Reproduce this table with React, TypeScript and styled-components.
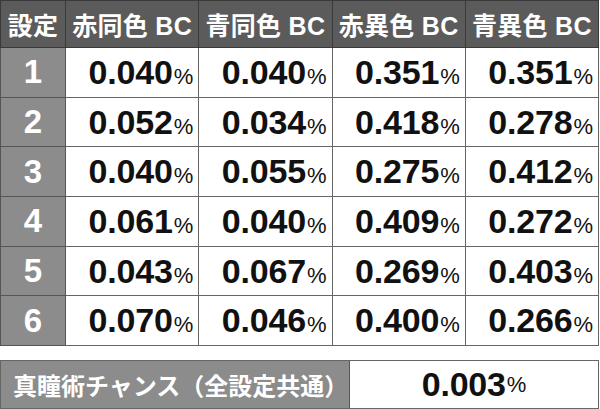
import { FC } from 'react';
import styled, { createGlobalStyle } from 'styled-components';

type Row = {
  setting: number;
  values: string[];
};

const headers = ['赤同色 BC', '青同色 BC', '赤異色 BC', '青異色 BC'];

const rows: Row[] = [
  { setting: 1, values: ['0.040', '0.040', '0.351', '0.351'] },
  { setting: 2, values: ['0.052', '0.034', '0.418', '0.278'] },
  { setting: 3, values: ['0.040', '0.055', '0.275', '0.412'] },
  { setting: 4, values: ['0.061', '0.040', '0.409', '0.272'] },
  { setting: 5, values: ['0.043', '0.067', '0.269', '0.403'] },
  { setting: 6, values: ['0.070', '0.046', '0.400', '0.266'] },
];

const Percent: FC<{ value: string }> = ({ value }) => (
  <>
    <Num>{value}</Num>
    <Unit>%</Unit>
  </>
);

const App: FC = () => (
  <>
    <GlobalStyle />
    <Page>
      <Table>
        <colgroup>
          <col style={{ width: 65 }} />
          <col />
          <col />
          <col />
          <col />
        </colgroup>
        <thead>
          <tr>
            <HeadCell>設定</HeadCell>
            {headers.map((h) => (
              <HeadCell key={h}>{h}</HeadCell>
            ))}
          </tr>
        </thead>
        <tbody>
          {rows.map((row) => (
            <tr key={row.setting}>
              <SettingCell>{row.setting}</SettingCell>
              {row.values.map((v, i) => (
                <ValueCell key={i}>
                  <Percent value={v} />
                </ValueCell>
              ))}
            </tr>
          ))}
        </tbody>
      </Table>
      <Common>
        <CommonLabel>真瞳術チャンス（全設定共通）</CommonLabel>
        <CommonValue>
          <Percent value="0.003" />
        </CommonValue>
      </Common>
    </Page>
  </>
);

export default App;

const GlobalStyle = createGlobalStyle`
  html, body {
    margin: 0;
    padding: 0;
    background: #ffffff;
  }
  body {
    font-family: "Liberation Sans", Arial, "Noto Sans CJK JP", sans-serif;
  }
`;

const Page = styled.div`
  width: 599px;
  height: 409px;
  display: flex;
  flex-direction: column;
  gap: 14px;
`;

const Table = styled.table`
  width: 599px;
  border-collapse: collapse;
  table-layout: fixed;
  border: 1px solid #555555;
`;

const HeadCell = styled.th`
  height: 46px;
  padding: 0;
  background: #5b5b5b;
  color: #ffffff;
  font-size: 25px;
  font-weight: 700;
  text-align: center;
  border: 1px solid #3a3a3a;
  white-space: nowrap;
  letter-spacing: 0.3px;
`;

const SettingCell = styled.td`
  height: 48.7px;
  padding: 0;
  background: #8c8c8c;
  color: #ffffff;
  font-size: 33px;
  font-weight: 700;
  text-align: center;
  border: 1px solid #555555;
`;

const ValueCell = styled.td`
  height: 48.7px;
  padding: 0 5px 0 0;
  background: #ffffff;
  color: #111111;
  text-align: right;
  border: 1px solid #666666;
  white-space: nowrap;
`;

const Num = styled.span`
  font-family: "Liberation Sans", Arial, sans-serif;
  font-size: 34px;
  font-weight: 700;
  letter-spacing: -0.2px;
`;

const Unit = styled.span`
  font-family: "Liberation Sans", Arial, sans-serif;
  font-size: 22px;
  font-weight: 400;
  margin-left: 1px;
`;

const Common = styled.div`
  display: grid;
  grid-template-columns: 349px 1fr;
  height: 48px;
  border: 1px solid #666666;
`;

const CommonLabel = styled.div`
  display: flex;
  align-items: center;
  padding-left: 12px;
  background: #8c8c8c;
  color: #ffffff;
  font-size: 24px;
  font-weight: 700;
  border-right: 1px solid #555555;
  white-space: nowrap;
`;

const CommonValue = styled.div`
  display: flex;
  align-items: center;
  justify-content: center;
  background: #ffffff;
  color: #111111;
  white-space: nowrap;
`;
